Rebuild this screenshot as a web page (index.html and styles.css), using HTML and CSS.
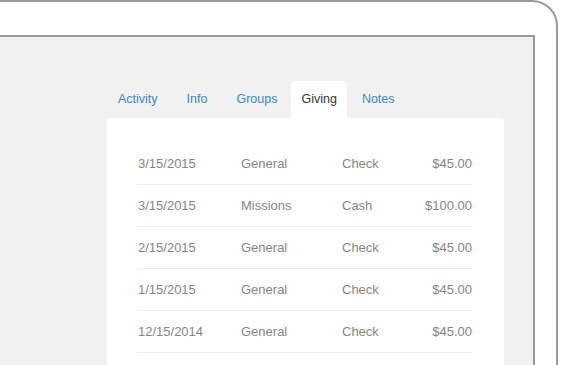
FILE: index.html
```html
<!DOCTYPE html>
<html lang="en">
<head>
    <meta charset="UTF-8">
    <title>Giving</title>
    <link rel="stylesheet" href="styles.css">
</head>
<body>
    <div class="device">
        <div class="screen">
            <nav class="tabs">
                <a class="tab">Activity</a>
                <a class="tab">Info</a>
                <a class="tab">Groups</a>
                <a class="tab active">Giving</a>
                <a class="tab">Notes</a>
            </nav>
            <div class="card">
                <div class="gift-row">
                    <span>3/15/2015</span>
                    <span>General</span>
                    <span>Check</span>
                    <span class="amount">$45.00</span>
                </div>
                <div class="gift-row">
                    <span>3/15/2015</span>
                    <span>Missions</span>
                    <span>Cash</span>
                    <span class="amount">$100.00</span>
                </div>
                <div class="gift-row">
                    <span>2/15/2015</span>
                    <span>General</span>
                    <span>Check</span>
                    <span class="amount">$45.00</span>
                </div>
                <div class="gift-row">
                    <span>1/15/2015</span>
                    <span>General</span>
                    <span>Check</span>
                    <span class="amount">$45.00</span>
                </div>
                <div class="gift-row">
                    <span>12/15/2014</span>
                    <span>General</span>
                    <span>Check</span>
                    <span class="amount">$45.00</span>
                </div>
            </div>
        </div>
    </div>
</body>
</html>
```

FILE: styles.css
```css
:root {
    --frame-color: #9a9a9a;
    --screen-bg: #f1f1f1;
    --link-color: #3b88c3;
    --text-dark: #333333;
    --text-muted: #858585;
    --line-color: #ededed;
}

html,
body {
    margin: 0;
    height: 100%;
    overflow: hidden;
    background-color: #ffffff;
    font-family: 'Liberation Sans', Arial, Helvetica, sans-serif;
}

.device {
    box-sizing: border-box;
    width: 610px;
    height: 420px;
    margin-left: -52px;
    padding: 33px 21px 0 0;
    border: 2px solid var(--frame-color);
    border-top-right-radius: 26px;
}

.screen {
    box-sizing: border-box;
    height: 100%;
    padding: 44px 29px 0 155px;
    background-color: var(--screen-bg);
    border: 2px solid var(--frame-color);
    border-bottom: none;
}

.tabs {
    display: flex;
    padding-left: 1px;
}

.tab {
    padding: 0 10px;
    margin-right: 9px;
    line-height: 37px;
    font-size: 12.5px;
    color: var(--link-color);
    border-radius: 4px 4px 0 0;
    cursor: pointer;
}

.tab.active {
    margin-left: -5px;
    margin-right: 5px;
    background-color: #ffffff;
    color: var(--text-dark);
}

.card {
    height: 300px;
    padding: 25px 32px 0 30px;
    background-color: #ffffff;
    border-radius: 4px 4px 0 0;
}

.gift-row {
    display: grid;
    grid-template-columns: 103px 101px 1fr auto;
    align-items: center;
    height: 41px;
    padding-left: 1px;
    border-bottom: 1px solid var(--line-color);
    font-size: 13px;
    color: var(--text-muted);
}

.amount {
    text-align: right;
}
```
